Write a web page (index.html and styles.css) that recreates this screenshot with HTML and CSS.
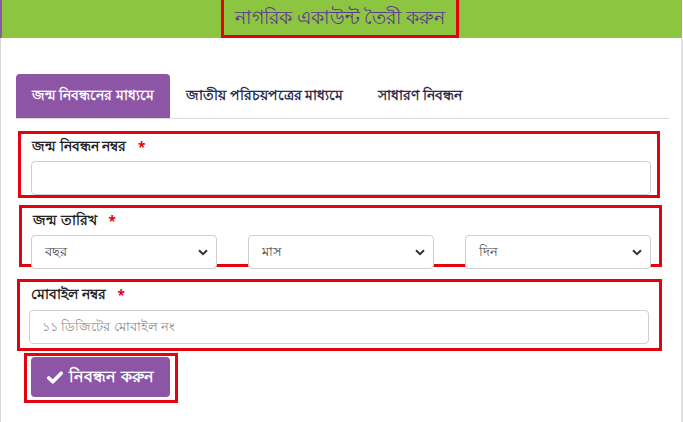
FILE: index.html
```html
<!DOCTYPE html>
<html lang="bn">
<head>
<meta charset="utf-8">
<title>নাগরিক একাউন্ট তৈরী করুন</title>
<link rel="stylesheet" href="styles.css">
</head>
<body>
<div class="page">
  <header class="topbar">
    <div class="title-box"><h1 class="title">নাগরিক একাউন্ট তৈরী করুন</h1></div>
  </header>
  <main class="panel">
    <nav class="tabs">
      <a class="tab active">জন্ম নিবন্ধনের মাধ্যমে</a>
      <a class="tab">জাতীয় পরিচয়পত্রের মাধ্যমে</a>
      <a class="tab">সাধারণ নিবন্ধন</a>
    </nav>
    <form class="form">
      <div class="group g1">
        <label class="label">জন্ম নিবন্ধন নম্বর <span class="req">*</span></label>
        <div class="input"></div>
      </div>
      <div class="group g2">
        <label class="label">জন্ম তারিখ <span class="req">*</span></label>
        <div class="selects">
          <div class="select"><span>বছর</span><svg width="10" height="7" viewBox="0 0 10 7"><path d="M1 1.2 L5 5.2 L9 1.2" fill="none" stroke="#333" stroke-width="2"/></svg></div>
          <div class="select"><span>মাস</span><svg width="10" height="7" viewBox="0 0 10 7"><path d="M1 1.2 L5 5.2 L9 1.2" fill="none" stroke="#333" stroke-width="2"/></svg></div>
          <div class="select"><span>দিন</span><svg width="10" height="7" viewBox="0 0 10 7"><path d="M1 1.2 L5 5.2 L9 1.2" fill="none" stroke="#333" stroke-width="2"/></svg></div>
        </div>
      </div>
      <div class="group g3">
        <label class="label">মোবাইল নম্বর <span class="req">*</span></label>
        <div class="input"><span class="placeholder">১১ ডিজিটের মোবাইল নং</span></div>
      </div>
      <div class="btn-box">
        <button type="button" class="btn"><svg width="16" height="13" viewBox="0 0 16 13"><path d="M1.8 7 L5.8 10.8 L14.2 2.2" fill="none" stroke="#fff" stroke-width="3.6" stroke-linecap="round" stroke-linejoin="round"/></svg><span>নিবন্ধন করুন</span></button>
      </div>
    </form>
  </main>
</div>
</body>
</html>
```
FILE: styles.css
```css
* { box-sizing: border-box; }
html, body { margin: 0; padding: 0; background: #fff; }
body { font-family: "Noto Sans", "Liberation Sans", sans-serif; color: #222; }
.page { width: 683px; height: 422px; overflow: hidden; }
.topbar {
  width: 682px;
  height: 38px;
  background: #8cc540;
  border-left: 2px solid #8e5aa6;
  display: flex;
  justify-content: center;
}
.title-box {
  width: 238px;
  height: 38px;
  border: 3px solid #e3030f;
  border-top: 0;
  margin-left: -4px;
  display: flex;
  align-items: center;
  justify-content: center;
}
.title { margin: 0; font-size: 19px; font-weight: 500; color: #5b3692; line-height: 1; white-space: nowrap; }
.panel {
  width: 683px;
  height: 384px;
  border-left: 1px solid #d8d8d8;
  border-right: 2px solid #e2e2e2;
  padding: 36px 0 0 15px;
}
.tabs {
  width: 653px;
  height: 45px;
  display: flex;
  border-bottom: 1px solid #dcdcdc;
}
.tab {
  height: 44px;
  padding: 0 16px;
  display: flex;
  align-items: center;
  font-size: 13.5px;
  font-weight: 700;
  color: #2c2b4c;
  border-radius: 4px 4px 0 0;
  white-space: nowrap;
}
.tab.active { background: #8c55a6; color: #fff; width: 154px; padding: 0; justify-content: center; }
.tab:nth-child(3) { padding-left: 19px; }
.form { display: flex; flex-direction: column; }
.group {
  border: 3px solid #e3030f;
  padding: 0 7px 0 10px;
  display: flex;
  flex-direction: column;
}
.g1 { margin: 12px 0 0 2px; width: 642px; height: 67px; }
.g2 { margin: 7px 0 0 3px; width: 643px; height: 62px; }
.g3 { margin: 12px 0 0 1px; width: 645px; height: 72px; }
.label {
  font-size: 13.5px;
  font-weight: 700;
  color: #222;
  height: 22px;
  display: flex;
  align-items: center;
  margin-top: 2px;
  padding-left: 1px;
}
.req { color: #e3030f; margin-left: 12px; }
.input {
  width: 620px;
  height: 34px;
  margin-top: 3px;
  border: 1px solid #cfcfcf;
  border-radius: 4px;
  display: flex;
  align-items: center;
  padding-left: 12px;
}
.g3 .input { margin-top: 4px; width: 620px; margin-left: -1px; }
.placeholder { font-size: 13px; color: #8a8a8a; }
.selects {
  width: 620px;
  margin-top: 3px;
  display: grid;
  grid-template-columns: 186px 186px 186px;
  column-gap: 31px;
  margin-left: -1px;
}
.select {
  height: 34px;
  border: 1px solid #cfcfcf;
  border-radius: 4px;
  background: #fff;
  display: flex;
  align-items: center;
  justify-content: space-between;
  padding: 0 8px 0 13px;
  font-size: 13px;
  color: #444;
}
.btn-box {
  margin: 2px 0 0 8px;
  width: 154px;
  height: 50px;
  border: 3px solid #e3030f;
  padding: 1px 0 0 4px;
}
.btn {
  width: 139px;
  height: 40px;
  background: #8c55a6;
  border: 0;
  border-radius: 4px;
  color: #fff;
  font-family: inherit;
  font-size: 16px;
  font-weight: 700;
  display: flex;
  align-items: center;
  justify-content: center;
  gap: 6px;
  padding: 0;
}
```
